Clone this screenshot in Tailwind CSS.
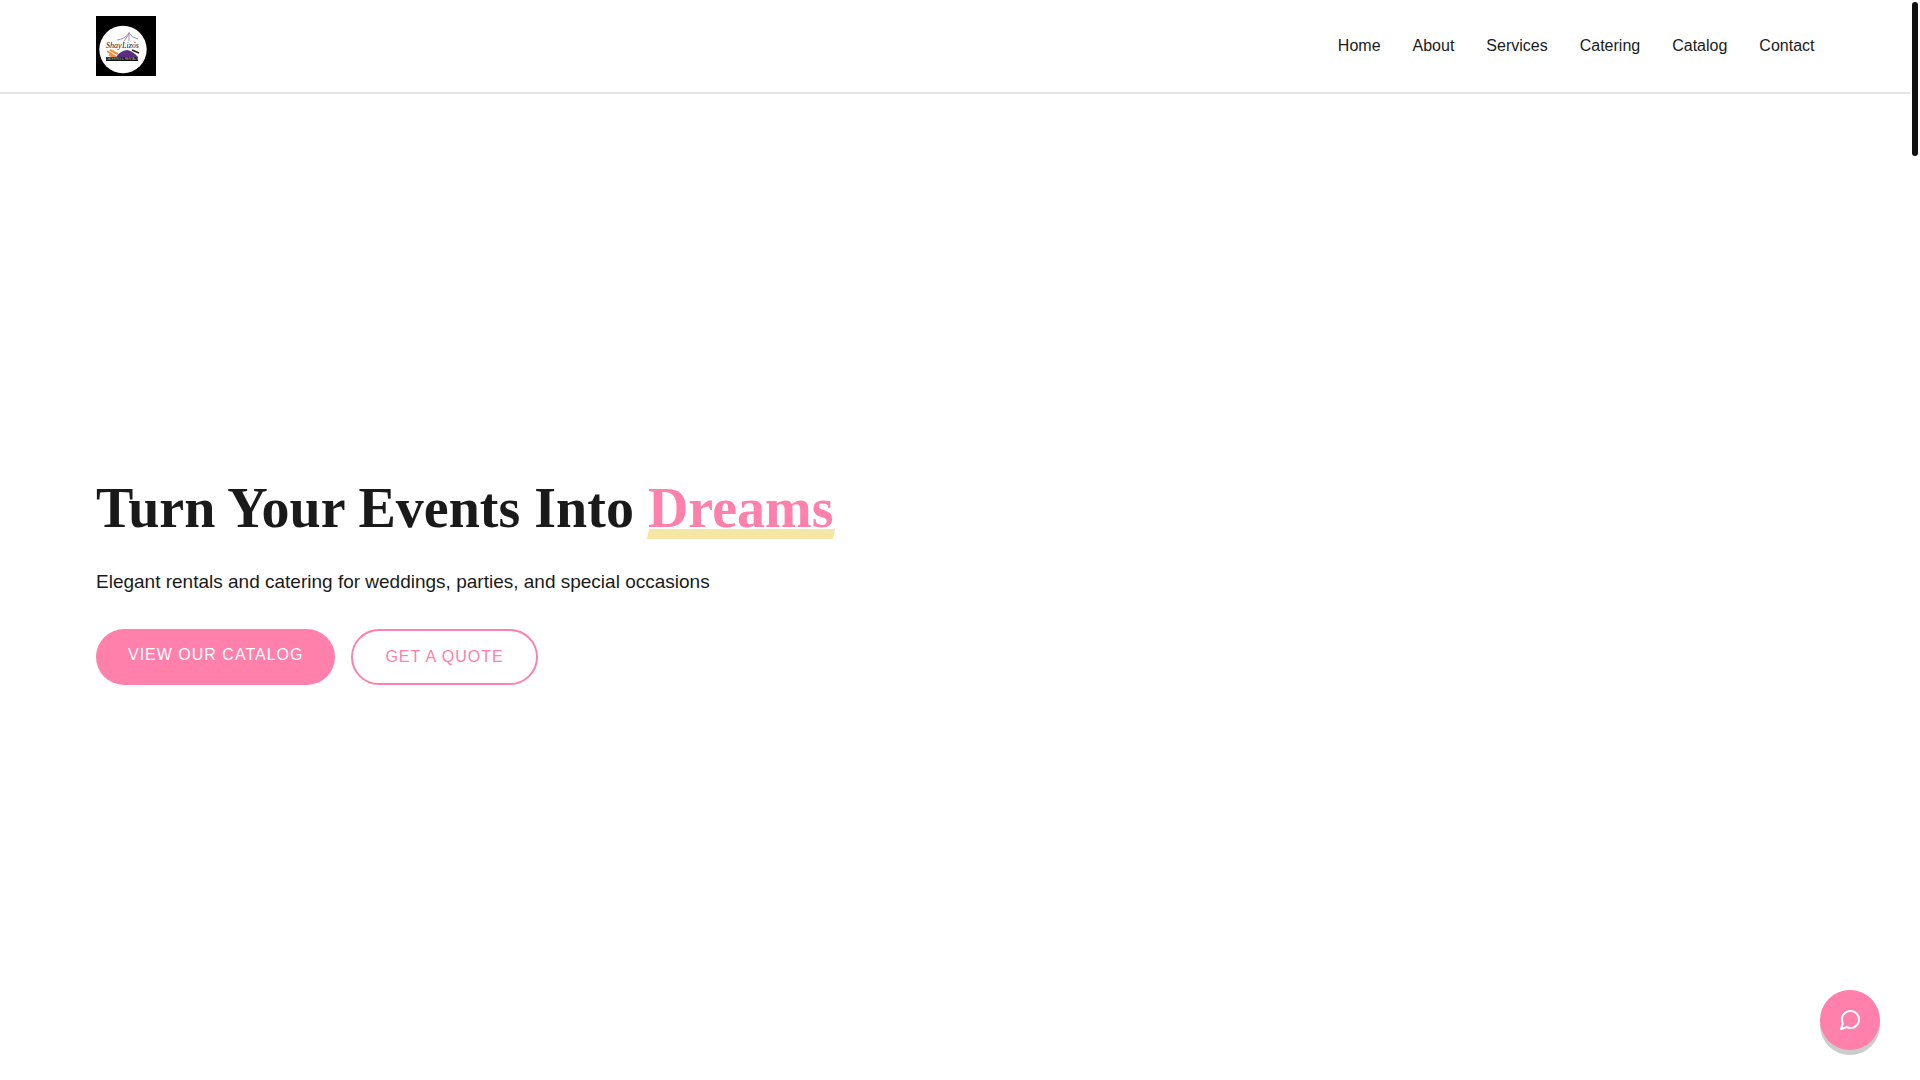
<!DOCTYPE html>
<html lang="en">
<head>
  <meta charset="UTF-8" />
  <meta name="viewport" content="width=device-width, initial-scale=1.0" />
  <title>Shay Lizós Catering &amp; Rentals</title>
  <script src="https://cdn.jsdelivr.net/npm/@tailwindcss/browser@4"></script>
</head>
<body class="bg-white text-[#1a1a1a] font-['Liberation_Sans',Arial,sans-serif] min-h-screen flex flex-col pr-[10px]">

  <!-- Header -->
  <header class="flex items-center justify-between pl-24 pr-[5%] py-4 border-b-2 border-[#e5e5e5]">
    <a href="#" aria-label="Home page">
      <svg class="block size-15" viewBox="0 0 60 60" aria-hidden="true">
        <rect width="60" height="60" fill="#000" />
        <circle cx="27" cy="33.5" r="23.7" fill="#fff" />
        <!-- canopy -->
        <path d="M21 24 Q29 23 33 17 Q36 22 42 23 M33 16 V25 M33 18 L28 25" fill="none" stroke="#a58bb5" stroke-width="1" />
        <!-- serving dome and wheat -->
        <path d="M20 41 Q24 35 31 34 Q37 35 42 41 Z" fill="#5b2d82" />
        <path d="M36 34 L43 37" stroke="#222" stroke-width="1.5" />
        <path d="M11 35 L20 41 M14 34 L22 38 M13 39 L18 41" stroke="#f0923c" stroke-width="2" />
        <text x="10" y="32" font-family="Liberation Serif, serif" font-style="italic" font-size="8" fill="#111">Shay</text>
        <text x="26" y="32" font-family="Liberation Serif, serif" font-style="italic" font-size="8" fill="#111">Lizós</text>
        <rect x="10" y="41" width="32" height="4" fill="#111" />
        <text x="26" y="44" text-anchor="middle" font-family="Liberation Sans, sans-serif" font-size="3" fill="#bbb">CATERING &amp; RENTALS</text>
      </svg>
    </a>
    <nav class="flex gap-8 text-base leading-6">
      <a href="#" class="hover:text-[#ff80ab]">Home</a>
      <a href="#about" class="hover:text-[#ff80ab]">About</a>
      <a href="#services" class="hover:text-[#ff80ab]">Services</a>
      <a href="#catering" class="hover:text-[#ff80ab]">Catering</a>
      <a href="#catalog" class="hover:text-[#ff80ab]">Catalog</a>
      <a href="#contact" class="hover:text-[#ff80ab]">Contact</a>
    </nav>
  </header>

  <!-- Hero -->
  <main class="flex-1 flex flex-col justify-center items-start pl-24 pr-[5%] pb-4">
    <h1 class="font-['Liberation_Serif',serif] font-bold text-[56px] leading-[70px] mb-6">
      Turn Your Events Into
      <span class="relative inline-block text-[#ff80ab]">Dreams<span class="absolute left-0 bottom-1 w-full h-[10px] bg-[#f5e6a3] -skew-x-12"></span></span>
    </h1>
    <p class="text-[19px] leading-[30px] mb-8">Elegant rentals and catering for weddings, parties, and special occasions</p>
    <div class="flex flex-wrap gap-4 text-base leading-6 tracking-[1px] uppercase">
      <a href="#catalog" class="px-8 py-3.5 rounded-[30px] bg-[#ff80ab] text-white">View Our Catalog</a>
      <a href="#contact" class="px-8 py-3.5 rounded-[30px] border-2 border-[#ff80ab] text-[#ff80ab]">Get a Quote</a>
    </div>
  </main>

  <!-- Chat button -->
  <button type="button" aria-label="Open chat" class="fixed right-10 bottom-[30px] size-15 rounded-full bg-[#ff80ab] text-white flex items-center justify-center shadow-[0_5px_0_#cccccc] cursor-pointer">
    <svg class="size-6" viewBox="0 0 24 24" fill="none" stroke="currentColor" stroke-width="2" stroke-linecap="round" stroke-linejoin="round" aria-hidden="true">
      <path d="M21 11.5a8.38 8.38 0 0 1-.9 3.8 8.5 8.5 0 0 1-7.6 4.7 8.38 8.38 0 0 1-3.8-.9L3 21l1.9-5.7a8.38 8.38 0 0 1-.9-3.8 8.5 8.5 0 0 1 4.7-7.6 8.38 8.38 0 0 1 3.8-.9h.5a8.48 8.48 0 0 1 8 8v.5z" />
    </svg>
  </button>

  <!-- Scroll indicator -->
  <div class="fixed right-0.5 top-0.5 w-1.5 h-[154px] rounded-full bg-[#111111]"></div>
</body>
</html>
